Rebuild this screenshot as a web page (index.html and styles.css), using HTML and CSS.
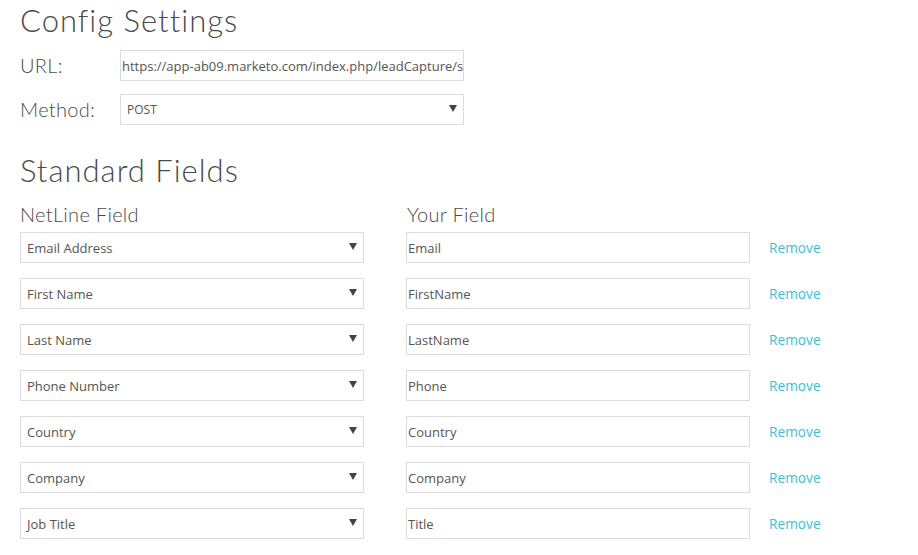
FILE: index.html
```html
<!DOCTYPE html>
<html>
<head>
<meta charset="utf-8">
<link rel="stylesheet" href="styles.css">
</head>
<body>
<div class="page">
  <h1 class="title">Config Settings</h1>
  <div class="config">
    <div class="label">URL:</div>
    <div class="box text-box url">https://app-ab09.marketo.com/index.php/leadCapture/save2</div>
    <div class="label">Method:</div>
    <div class="box select post"><span>POST</span><svg class="arrow" width="8" height="7" viewBox="0 0 8 7"><path d="M0 0H8L4 7Z"/></svg></div>
  </div>

  <h1 class="title std">Standard Fields</h1>
  <div class="fields">
    <div class="col-head">NetLine Field</div>
    <div class="col-head">Your Field</div>
    <div></div>

    <div class="box select"><span>Email Address</span><svg class="arrow" width="8" height="7" viewBox="0 0 8 7"><path d="M0 0H8L4 7Z"/></svg></div>
    <div class="box text-box">Email</div>
    <a class="remove">Remove</a>

    <div class="box select"><span>First Name</span><svg class="arrow" width="8" height="7" viewBox="0 0 8 7"><path d="M0 0H8L4 7Z"/></svg></div>
    <div class="box text-box">FirstName</div>
    <a class="remove">Remove</a>

    <div class="box select"><span>Last Name</span><svg class="arrow" width="8" height="7" viewBox="0 0 8 7"><path d="M0 0H8L4 7Z"/></svg></div>
    <div class="box text-box">LastName</div>
    <a class="remove">Remove</a>

    <div class="box select"><span>Phone Number</span><svg class="arrow" width="8" height="7" viewBox="0 0 8 7"><path d="M0 0H8L4 7Z"/></svg></div>
    <div class="box text-box">Phone</div>
    <a class="remove">Remove</a>

    <div class="box select"><span>Country</span><svg class="arrow" width="8" height="7" viewBox="0 0 8 7"><path d="M0 0H8L4 7Z"/></svg></div>
    <div class="box text-box">Country</div>
    <a class="remove">Remove</a>

    <div class="box select"><span>Company</span><svg class="arrow" width="8" height="7" viewBox="0 0 8 7"><path d="M0 0H8L4 7Z"/></svg></div>
    <div class="box text-box">Company</div>
    <a class="remove">Remove</a>

    <div class="box select"><span>Job Title</span><svg class="arrow" width="8" height="7" viewBox="0 0 8 7"><path d="M0 0H8L4 7Z"/></svg></div>
    <div class="box text-box">Title</div>
    <a class="remove">Remove</a>
  </div>
</div>
</body>
</html>
```

FILE: styles.css
```css
html, body {
  margin: 0;
  padding: 0;
  background: #fff;
}
body {
  font-family: "Open Sans", "Liberation Sans", sans-serif;
  color: #555;
}
.page {
  padding: 0 0 0 20px;
}
.title {
  font-family: Lato, "Open Sans", sans-serif;
  font-weight: 300;
  font-size: 31px;
  letter-spacing: 1px;
  color: #4a4a4a;
  margin: 0;
  line-height: 40px;
  height: 40px;
}
.config {
  display: grid;
  grid-template-columns: 100px 344px;
  row-gap: 13px;
  margin-top: 10px;
  align-items: center;
}
.label {
  font-family: Lato, "Open Sans", sans-serif;
  font-weight: 300;
  font-size: 20px;
  letter-spacing: 0.3px;
  color: #4a4a4a;
  line-height: 31px;
}
.box {
  box-sizing: border-box;
  height: 31px;
  border: 1px solid #dcdcdc;
  background: #fff;
  font-size: 13px;
  color: #555;
  display: flex;
  align-items: center;
  white-space: nowrap;
  overflow: hidden;
}
.text-box {
  padding-left: 1px;
}
.select {
  justify-content: space-between;
  padding: 0 6px 0 6px;
}
.select.post span {
  font-size: 12px;
}
.arrow {
  fill: #444;
  margin-top: -2px;
}
.std {
  margin-top: 25px;
}
.fields {
  display: grid;
  grid-template-columns: 344px 344px auto;
  column-gap: 42px;
  row-gap: 15px;
  align-items: center;
  margin-top: 11px;
}
.fields .remove {
  margin-left: -23px;
}
.col-head {
  font-family: Lato, "Open Sans", sans-serif;
  font-weight: 300;
  font-size: 20px;
  letter-spacing: 0.3px;
  color: #4a4a4a;
  line-height: 26px;
  margin-bottom: -10px;
}
.col-head + .col-head {
  margin-left: 1px;
}
.remove {
  font-size: 13.7px;
  color: #3bbfda;
  text-decoration: none;
}
```
